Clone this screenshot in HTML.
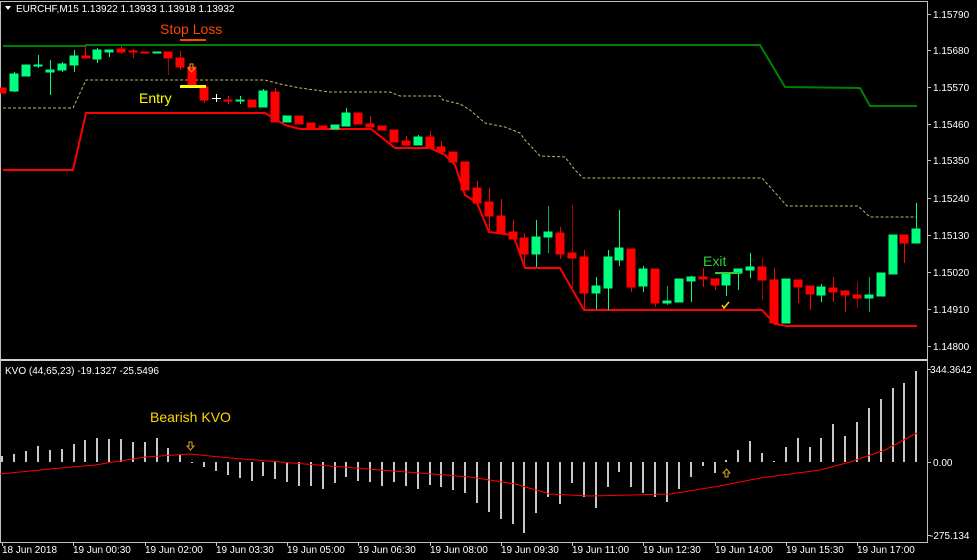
<!DOCTYPE html><html><head><meta charset="utf-8"><style>
html,body{margin:0;padding:0;background:#000;}
svg{display:block;}
text{font-family:"Liberation Sans",sans-serif;font-size:10px;fill:#fff;}
</style></head><body>
<svg width="977" height="560" xmlns="http://www.w3.org/2000/svg">
<rect width="977" height="560" fill="#000"/>
<!-- frames -->
<g stroke="#c0c0c0" stroke-width="1" fill="none">
<line x1="0" y1="1.5" x2="927" y2="1.5"/>
<line x1="927.5" y1="1" x2="927.5" y2="543"/>
<line x1="0.5" y1="1" x2="0.5" y2="543"/>
<line x1="0" y1="542.5" x2="927" y2="542.5"/>
</g>
<rect x="0" y="359" width="928" height="2" fill="#d0d0d0"/>
<!-- price ticks -->
<g stroke="#c0c0c0"><line x1="927" y1="14.5" x2="931" y2="14.5"/><line x1="927" y1="50.5" x2="931" y2="50.5"/><line x1="927" y1="87.5" x2="931" y2="87.5"/><line x1="927" y1="124.5" x2="931" y2="124.5"/><line x1="927" y1="160.5" x2="931" y2="160.5"/><line x1="927" y1="198.5" x2="931" y2="198.5"/><line x1="927" y1="235.5" x2="931" y2="235.5"/><line x1="927" y1="272.5" x2="931" y2="272.5"/><line x1="927" y1="309.5" x2="931" y2="309.5"/><line x1="927" y1="346.5" x2="931" y2="346.5"/><line x1="927" y1="369.5" x2="931" y2="369.5"/><line x1="927" y1="462.5" x2="931" y2="462.5"/><line x1="927" y1="535.5" x2="931" y2="535.5"/>
<line x1="2.5" y1="542" x2="2.5" y2="546"/><line x1="73.5" y1="542" x2="73.5" y2="546"/><line x1="145.5" y1="542" x2="145.5" y2="546"/><line x1="216.5" y1="542" x2="216.5" y2="546"/><line x1="287.5" y1="542" x2="287.5" y2="546"/><line x1="358.5" y1="542" x2="358.5" y2="546"/><line x1="430.5" y1="542" x2="430.5" y2="546"/><line x1="501.5" y1="542" x2="501.5" y2="546"/><line x1="572.5" y1="542" x2="572.5" y2="546"/><line x1="643.5" y1="542" x2="643.5" y2="546"/><line x1="715.5" y1="542" x2="715.5" y2="546"/><line x1="786.5" y1="542" x2="786.5" y2="546"/><line x1="857.5" y1="542" x2="857.5" y2="546"/></g>
<g>
<text x="933" y="18">1.15790</text><text x="933" y="54">1.15680</text><text x="933" y="91">1.15570</text><text x="933" y="128">1.15460</text><text x="933" y="164">1.15350</text><text x="933" y="202">1.15240</text><text x="933" y="239">1.15130</text><text x="933" y="276">1.15020</text><text x="933" y="313">1.14910</text><text x="933" y="350">1.14800</text>
<text x="930" y="373">344.3642</text><text x="933" y="466">0.00</text><text x="930" y="539">-275.134</text>
<text x="2" y="553">18 Jun 2018</text><text x="73" y="553">19 Jun 00:30</text><text x="145" y="553">19 Jun 02:00</text><text x="216" y="553">19 Jun 03:30</text><text x="287" y="553">19 Jun 05:00</text><text x="358" y="553">19 Jun 06:30</text><text x="430" y="553">19 Jun 08:00</text><text x="501" y="553">19 Jun 09:30</text><text x="572" y="553">19 Jun 11:00</text><text x="643" y="553">19 Jun 12:30</text><text x="715" y="553">19 Jun 14:00</text><text x="786" y="553">19 Jun 15:30</text><text x="857" y="553">19 Jun 17:00</text>
<text x="16" y="12">EURCHF,M15  1.13922 1.13933 1.13918 1.13932</text>
<text x="5" y="374">KVO (44,65,23)  -19.1327 -25.5496</text>
</g>
<polygon points="5,6 11,6 8,10" fill="#fff"/>
<!-- bands -->
<polyline fill="none" stroke="#008000" stroke-width="2" points="3,46 85,46 86,45 760,45 785,87 860,88 870,106 917,106"/>
<polyline fill="none" stroke="#bdb76b" stroke-width="1" stroke-dasharray="3,2" points="3,108 73,108 86,80 265,80 280,84 300,88 330,92 390,92 400,96 440,96 443,100 460,104 470,110 485,123 505,127 520,133 525,140 540,156 565,157 575,170 583,178 762,178 787,206 858,206 870,217 917,217"/>
<polyline fill="none" stroke="#ff0000" stroke-width="2" points="3,170 73,170 86,113 265,113 285,125 300,129 371,129 395,148 430,148 445,155 455,165 465,195 477,203 489,232 512,235 515,240 525,268 560,268 584,310 762,310 775,324 787,326 917,326"/>
<!-- candles -->
<g stroke-width="1">
<g fill="#ff0000" stroke="#ff0000">
<rect x="-2" y="88" width="8" height="5"/>
<line x1="85.5" y1="45" x2="85.5" y2="58"/><rect x="82" y="56" width="8" height="2"/>
<line x1="121.5" y1="46" x2="121.5" y2="54"/><rect x="117" y="49" width="8" height="3"/>
<line x1="133.5" y1="49" x2="133.5" y2="58"/><rect x="129" y="51" width="8" height="1"/>
<rect x="141" y="52" width="8" height="1"/>
<line x1="168.5" y1="52" x2="168.5" y2="75" stroke="#a00"/><rect x="164" y="52" width="8" height="6"/>
<line x1="180.5" y1="51" x2="180.5" y2="70"/><rect x="176" y="58" width="8" height="9"/>
<line x1="192.5" y1="67" x2="192.5" y2="88"/><rect x="188" y="67" width="8" height="19"/>
<line x1="204.5" y1="87" x2="204.5" y2="103"/><rect x="200" y="87" width="8" height="13"/>
<line x1="228.5" y1="96" x2="228.5" y2="104"/><rect x="224" y="100" width="8" height="1"/>
<rect x="248" y="100" width="8" height="7"/>
<line x1="275.5" y1="88" x2="275.5" y2="122"/><rect x="271" y="92" width="8" height="30"/>
<rect x="295" y="116" width="8" height="8"/>
<rect x="307" y="123" width="8" height="5"/>
<rect x="319" y="126" width="8" height="3"/>
<rect x="354" y="113" width="8" height="11"/>
<line x1="370.5" y1="116" x2="370.5" y2="127"/><rect x="366" y="124" width="8" height="3"/>
<rect x="378" y="126" width="8" height="4"/>
<rect x="390" y="130" width="8" height="12"/>
<line x1="406.5" y1="136" x2="406.5" y2="145"/><rect x="402" y="141" width="8" height="4"/>
<line x1="430.5" y1="131" x2="430.5" y2="148"/><rect x="426" y="137" width="8" height="11"/>
<line x1="441.5" y1="141" x2="441.5" y2="155"/><rect x="437" y="147" width="8" height="5"/>
<rect x="449" y="152" width="8" height="10"/>
<rect x="461" y="162" width="8" height="28"/>
<line x1="477.5" y1="181" x2="477.5" y2="203"/><rect x="473" y="188" width="8" height="15"/>
<line x1="489.5" y1="188" x2="489.5" y2="230"/><rect x="485" y="202" width="8" height="14"/>
<line x1="501.5" y1="199" x2="501.5" y2="233"/><rect x="497" y="216" width="8" height="17"/>
<line x1="513.5" y1="220" x2="513.5" y2="239"/><rect x="509" y="232" width="8" height="7"/>
<line x1="524.5" y1="233" x2="524.5" y2="268"/><rect x="520" y="238" width="8" height="16"/>
<line x1="560.5" y1="227" x2="560.5" y2="259"/><rect x="556" y="233" width="8" height="21"/>
<line x1="572.5" y1="205" x2="572.5" y2="290" stroke="#a00"/><rect x="568" y="253" width="8" height="5"/>
<line x1="584.5" y1="250" x2="584.5" y2="310"/><rect x="580" y="257" width="8" height="36"/>
<line x1="631.5" y1="249" x2="631.5" y2="292"/><rect x="627" y="249" width="8" height="38"/>
<line x1="655.5" y1="269" x2="655.5" y2="307"/><rect x="651" y="269" width="8" height="34"/>
<line x1="703.5" y1="268" x2="703.5" y2="287"/><rect x="699" y="277" width="8" height="2"/>
<line x1="715.5" y1="279" x2="715.5" y2="290"/><rect x="711" y="279" width="8" height="6"/>
<line x1="762.5" y1="258" x2="762.5" y2="300" stroke="#a00"/><rect x="758" y="267" width="8" height="13"/>
<line x1="774.5" y1="268" x2="774.5" y2="325"/><rect x="770" y="280" width="8" height="43"/>
<line x1="798.5" y1="280" x2="798.5" y2="303"/><rect x="794" y="280" width="8" height="7"/>
<line x1="810.5" y1="286" x2="810.5" y2="310"/><rect x="806" y="286" width="8" height="8"/>
<line x1="833.5" y1="277" x2="833.5" y2="302"/><rect x="829" y="288" width="8" height="4"/>
<line x1="845.5" y1="290" x2="845.5" y2="312"/><rect x="841" y="291" width="8" height="4"/>
<line x1="857.5" y1="282" x2="857.5" y2="308" stroke="#a00"/><rect x="853" y="295" width="8" height="3"/>
<line x1="904.5" y1="235" x2="904.5" y2="263"/><rect x="900" y="235" width="8" height="8"/>
</g>
<g fill="#00ff7f" stroke="#00ff7f">
<line x1="14.5" y1="72" x2="14.5" y2="92"/><rect x="10" y="74" width="8" height="17"/>
<rect x="22" y="65" width="8" height="11"/>
<line x1="38.5" y1="55" x2="38.5" y2="68"/><rect x="34" y="65" width="8" height="1"/>
<line x1="50.5" y1="60" x2="50.5" y2="95"/><rect x="46" y="70" width="8" height="2"/>
<line x1="62.5" y1="62" x2="62.5" y2="72"/><rect x="58" y="64" width="8" height="6"/>
<line x1="74.5" y1="50" x2="74.5" y2="72"/><rect x="70" y="56" width="8" height="9"/>
<line x1="97.5" y1="48" x2="97.5" y2="63"/><rect x="93" y="50" width="8" height="9"/>
<line x1="109.5" y1="50" x2="109.5" y2="57"/><rect x="105" y="50" width="8" height="2"/>
<rect x="153" y="52" width="8" height="1"/>
<line x1="240.5" y1="96" x2="240.5" y2="104"/><rect x="236" y="100" width="8" height="1"/>
<line x1="263.5" y1="89" x2="263.5" y2="107"/><rect x="259" y="91" width="8" height="16"/>
<rect x="283" y="116" width="8" height="6"/>
<rect x="331" y="125" width="8" height="4"/>
<line x1="346.5" y1="108" x2="346.5" y2="126"/><rect x="342" y="113" width="8" height="13"/>
<line x1="418.5" y1="135" x2="418.5" y2="145"/><rect x="414" y="137" width="8" height="8"/>
<line x1="536.5" y1="220" x2="536.5" y2="267"/><rect x="532" y="237" width="8" height="17"/>
<line x1="548.5" y1="206" x2="548.5" y2="253" stroke="#0a6"/><rect x="544" y="232" width="8" height="5"/>
<line x1="596.5" y1="277" x2="596.5" y2="309"/><rect x="592" y="286" width="8" height="7"/>
<line x1="608.5" y1="250" x2="608.5" y2="310"/><rect x="604" y="257" width="8" height="31"/>
<line x1="619.5" y1="210" x2="619.5" y2="266"/><rect x="615" y="248" width="8" height="12"/>
<line x1="643.5" y1="266" x2="643.5" y2="292"/><rect x="639" y="269" width="8" height="17"/>
<line x1="667.5" y1="286" x2="667.5" y2="305" stroke="#0a6"/><rect x="663" y="301" width="8" height="2"/>
<rect x="675" y="279" width="8" height="23"/>
<line x1="691.5" y1="276" x2="691.5" y2="302"/><rect x="687" y="277" width="8" height="4"/>
<line x1="726.5" y1="274" x2="726.5" y2="296"/><rect x="722" y="274" width="8" height="11"/>
<line x1="738.5" y1="269" x2="738.5" y2="290"/><rect x="734" y="269" width="8" height="4"/>
<line x1="750.5" y1="253" x2="750.5" y2="278"/><rect x="746" y="267" width="8" height="3"/>
<rect x="782" y="279" width="8" height="44"/>
<line x1="821.5" y1="284" x2="821.5" y2="302"/><rect x="817" y="287" width="8" height="8"/>
<line x1="869.5" y1="277" x2="869.5" y2="312" stroke="#0a6"/><rect x="865" y="295" width="8" height="3"/>
<rect x="877" y="273" width="8" height="23"/>
<rect x="889" y="235" width="8" height="39"/>
<line x1="916.5" y1="203" x2="916.5" y2="243"/><rect x="912" y="229" width="8" height="14"/>
</g>
<g stroke="#fff"><line x1="216.5" y1="94" x2="216.5" y2="102"/><line x1="212" y1="98.5" x2="221" y2="98.5"/></g>
</g>
<!-- annotations -->
<rect x="180" y="85" width="26" height="3" fill="#ffff00"/>
<rect x="180" y="39" width="26" height="2" fill="#ff4500"/>
<rect x="715" y="272" width="26" height="2" fill="#32cd32"/>
<text x="160" y="34" style="font-size:14px;fill:#ff4500">Stop Loss</text>
<text x="139" y="103" style="font-size:14px;fill:#ffff00">Entry</text>
<text x="703" y="266" style="font-size:14px;fill:#32cd32">Exit</text>
<text x="150" y="422" style="font-size:14px;fill:#ffd700">Bearish KVO</text>
<path d="M722 305 l2 3 l5 -6" stroke="#ffd700" stroke-width="1.5" fill="none"/>
<path d="M190 64 h3 v4 h2 l-3.5 4 l-3.5 -4 h2z" fill="none" stroke="#daa520" stroke-width="1"/>
<path d="M189 442 h3 v4 h2 l-3.5 4 l-3.5 -4 h2z" fill="none" stroke="#daa520" stroke-width="1"/>
<path d="M725 477 h3 v-4 h2 l-3.5 -4 l-3.5 4 h2z" fill="none" stroke="#daa520" stroke-width="1"/>
<!-- KVO bars -->
<g stroke="#c8c8c8" stroke-width="2">
<line x1="2" y1="462" x2="2" y2="456"/><line x1="14" y1="462" x2="14" y2="454"/><line x1="26" y1="462" x2="26" y2="451"/><line x1="38" y1="462" x2="38" y2="446"/><line x1="50" y1="462" x2="50" y2="450"/><line x1="62" y1="462" x2="62" y2="449"/><line x1="74" y1="462" x2="74" y2="444"/><line x1="85" y1="462" x2="85" y2="440"/><line x1="97" y1="462" x2="97" y2="438"/><line x1="109" y1="462" x2="109" y2="439"/><line x1="121" y1="462" x2="121" y2="439"/><line x1="133" y1="462" x2="133" y2="442"/><line x1="145" y1="462" x2="145" y2="442"/><line x1="157" y1="462" x2="157" y2="438"/><line x1="168" y1="462" x2="168" y2="448"/><line x1="180" y1="462" x2="180" y2="455"/><line x1="192" y1="462" x2="192" y2="463"/>
<line x1="204" y1="462" x2="204" y2="467"/><line x1="216" y1="462" x2="216" y2="471"/><line x1="228" y1="462" x2="228" y2="475"/><line x1="240" y1="462" x2="240" y2="478"/><line x1="252" y1="462" x2="252" y2="481"/><line x1="263" y1="462" x2="263" y2="476"/><line x1="275" y1="462" x2="275" y2="479"/><line x1="287" y1="462" x2="287" y2="482"/><line x1="299" y1="462" x2="299" y2="486"/><line x1="311" y1="462" x2="311" y2="486"/><line x1="323" y1="462" x2="323" y2="489"/><line x1="335" y1="462" x2="335" y2="483"/><line x1="346" y1="462" x2="346" y2="477"/><line x1="358" y1="462" x2="358" y2="481"/><line x1="370" y1="462" x2="370" y2="482"/><line x1="382" y1="462" x2="382" y2="486"/><line x1="394" y1="462" x2="394" y2="482"/><line x1="406" y1="462" x2="406" y2="486"/><line x1="418" y1="462" x2="418" y2="489"/><line x1="430" y1="462" x2="430" y2="485"/><line x1="441" y1="462" x2="441" y2="487"/><line x1="453" y1="462" x2="453" y2="490"/><line x1="465" y1="462" x2="465" y2="493"/><line x1="477" y1="462" x2="477" y2="503"/><line x1="489" y1="462" x2="489" y2="512"/><line x1="501" y1="462" x2="501" y2="519"/><line x1="513" y1="462" x2="513" y2="524"/><line x1="524" y1="462" x2="524" y2="533"/><line x1="536" y1="462" x2="536" y2="513"/><line x1="548" y1="462" x2="548" y2="497"/><line x1="560" y1="462" x2="560" y2="504"/><line x1="572" y1="462" x2="572" y2="483"/><line x1="584" y1="462" x2="584" y2="497"/><line x1="596" y1="462" x2="596" y2="508"/><line x1="608" y1="462" x2="608" y2="487"/><line x1="619" y1="462" x2="619" y2="472"/><line x1="631" y1="462" x2="631" y2="487"/><line x1="643" y1="462" x2="643" y2="493"/><line x1="655" y1="462" x2="655" y2="497"/><line x1="667" y1="462" x2="667" y2="502"/><line x1="679" y1="462" x2="679" y2="489"/><line x1="691" y1="462" x2="691" y2="477"/><line x1="703" y1="462" x2="703" y2="466"/><line x1="715" y1="462" x2="715" y2="473"/>
<line x1="726" y1="462" x2="726" y2="460"/><line x1="738" y1="462" x2="738" y2="450"/><line x1="750" y1="462" x2="750" y2="441"/><line x1="762" y1="462" x2="762" y2="453"/><line x1="774" y1="462" x2="774" y2="461"/><line x1="786" y1="462" x2="786" y2="447"/><line x1="798" y1="462" x2="798" y2="438"/><line x1="810" y1="462" x2="810" y2="447"/><line x1="821" y1="462" x2="821" y2="438"/><line x1="833" y1="462" x2="833" y2="424"/><line x1="845" y1="462" x2="845" y2="436"/><line x1="857" y1="462" x2="857" y2="422"/><line x1="869" y1="462" x2="869" y2="408"/><line x1="881" y1="462" x2="881" y2="399"/><line x1="893" y1="462" x2="893" y2="388"/><line x1="904" y1="462" x2="904" y2="383"/><line x1="916" y1="462" x2="916" y2="371"/>
</g>
<polyline fill="none" stroke="#ff0000" stroke-width="1" points="0,474 50,469 95,465 145,457 190,454 230,458 280,462 330,466 380,470 420,473 470,477 515,484 550,494 590,496 670,494 720,486 760,478 820,470 850,462 885,450 917,433"/>
</svg>
</body></html>
